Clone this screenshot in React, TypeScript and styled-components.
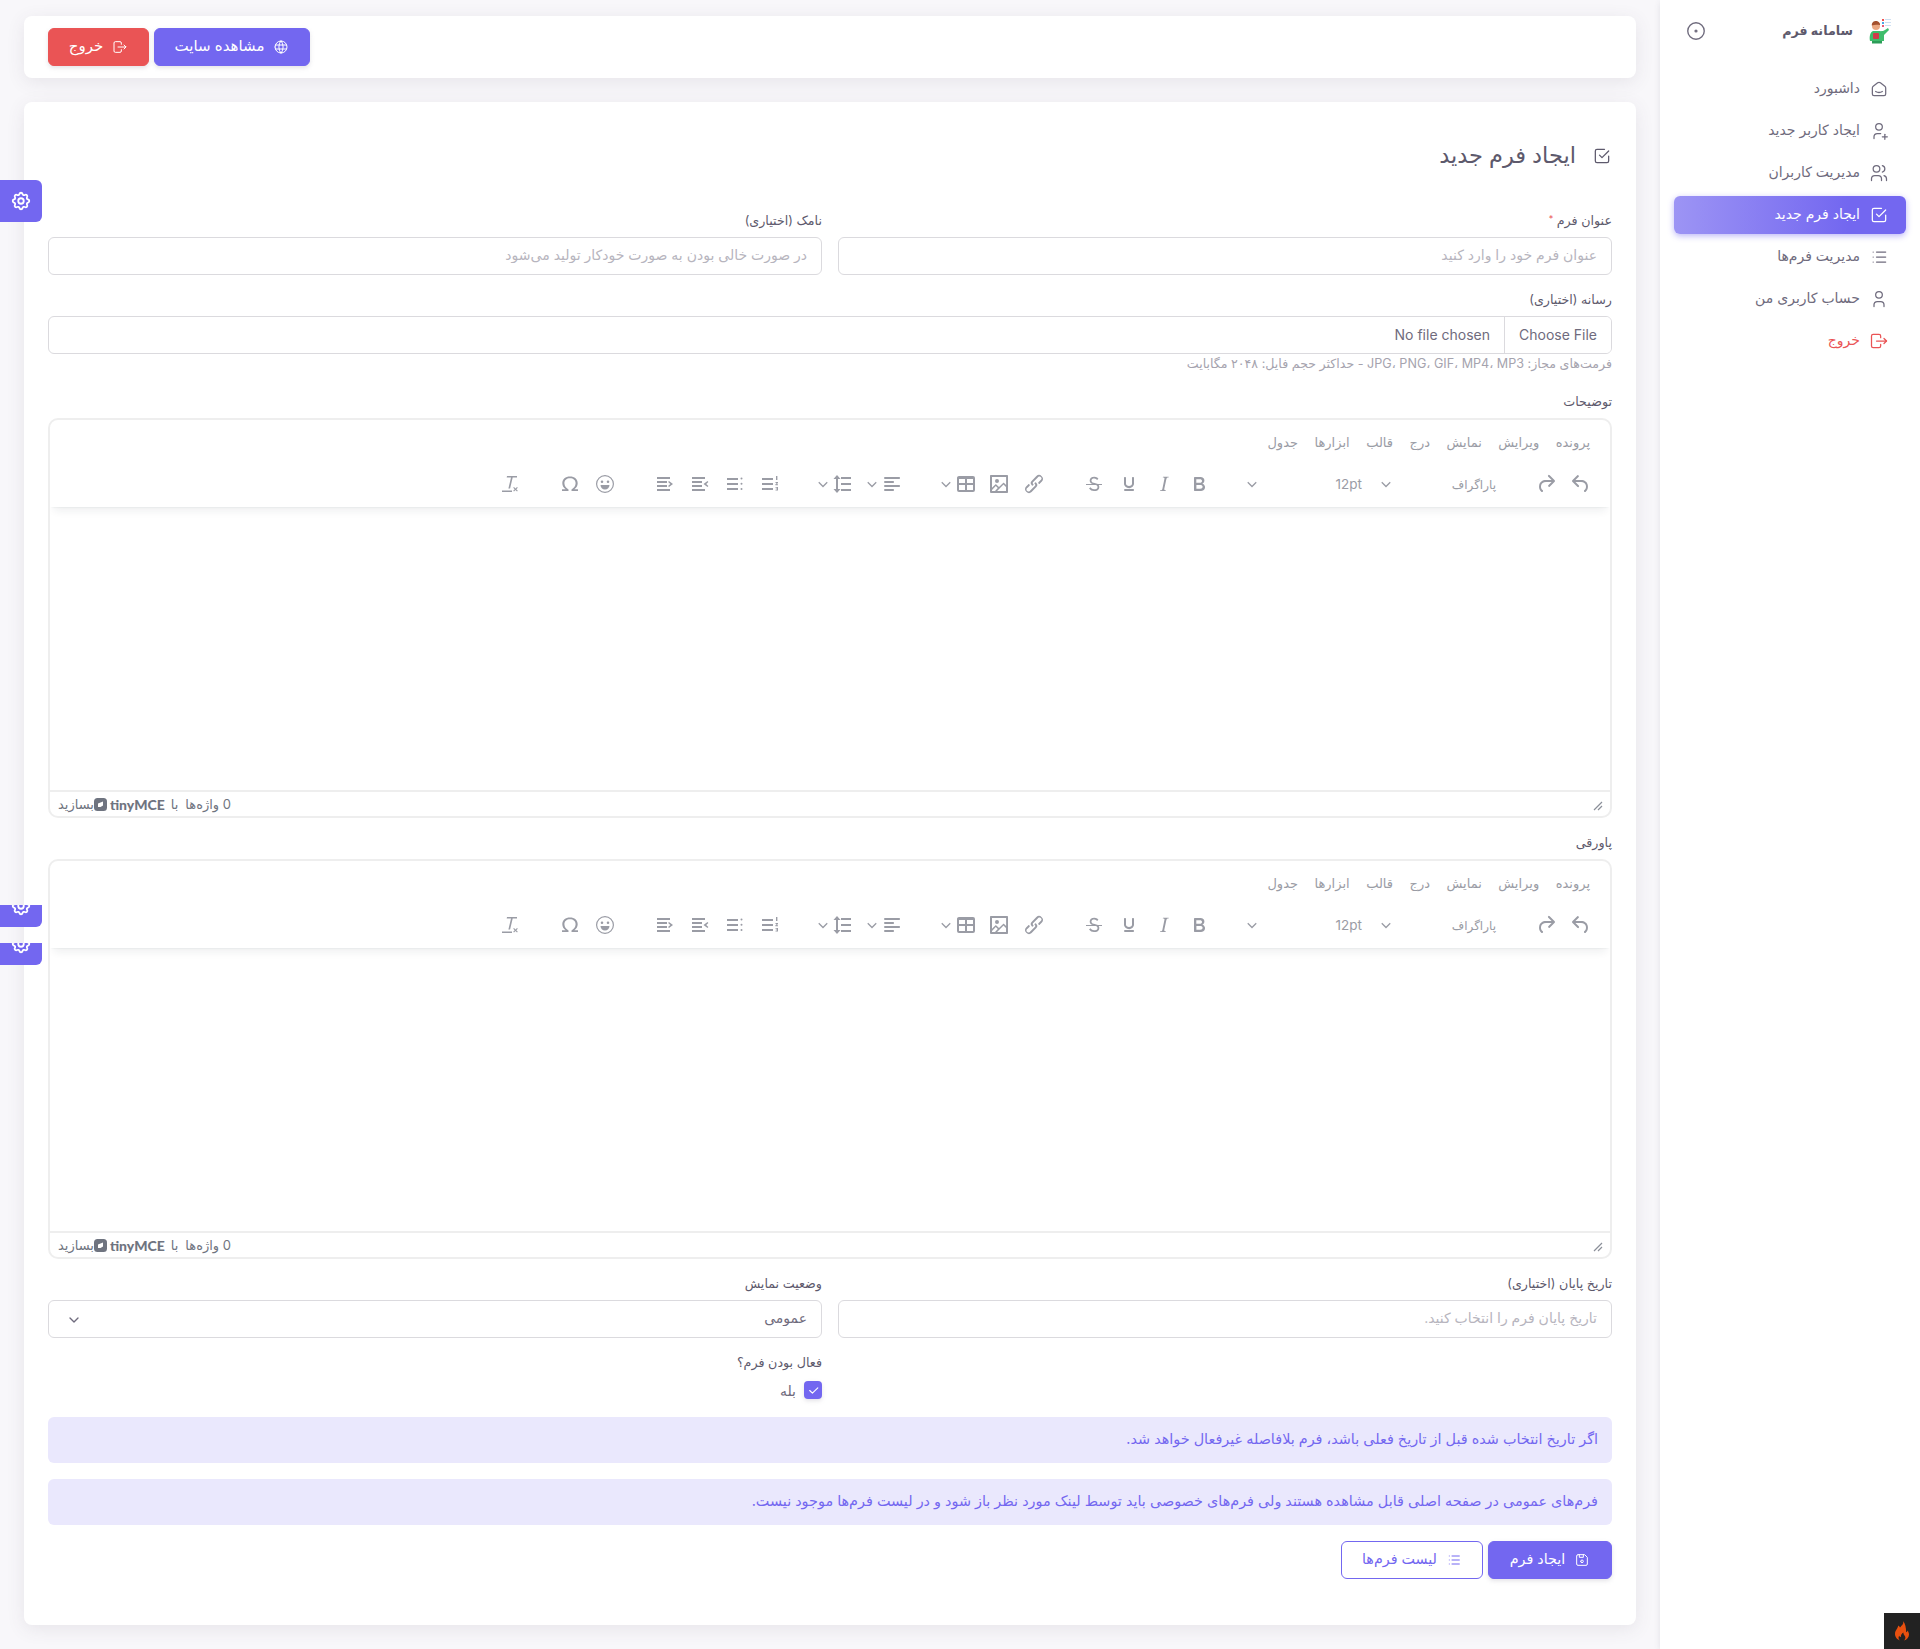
import React from 'react';
import styled, { createGlobalStyle } from 'styled-components';
import {
  TbSmartHome,
  TbUserPlus,
  TbUsers,
  TbCheckbox,
  TbList,
  TbUser,
  TbLogout,
  TbWorld,
  TbSettings,
  TbDeviceFloppy,
  TbCircleDot,
  TbChevronDown,
  TbCheck,
} from 'react-icons/tb';

const GlobalStyle = createGlobalStyle`
  html, body {
    margin: 0;
    padding: 0;
    background: #f8f7fa;
  }
  body {
    direction: rtl;
    font-family: Inter, "Noto Sans", "DejaVu Sans", sans-serif;
    color: #6f6b7d;
  }
  * { box-sizing: border-box; }
`;

const Page = styled.div`
  position: relative;
  display: flex;
  height: 1649px;
  overflow: hidden;
`;

const Sidebar = styled.aside`
  width: 260px;
  flex: none;
  background: #fff;
  box-shadow: 0 2px 6px rgba(75, 70, 92, 0.12);
  padding: 0 14px;
`;

const Brand = styled.div`
  display: flex;
  align-items: center;
  height: 62px;
  padding: 0 14px 0 11px;
`;

const BrandName = styled.span`
  font-size: 12.7px;
  font-weight: 700;
  color: #5d596c;
  margin-right: 15px;
  margin-top: -2px;
`;

const CollapseBtn = styled.span`
  margin-right: auto;
  display: flex;
  color: #6f6b7d;
  font-size: 22px;
  svg {
    stroke-width: 1.5;
  }
`;

const Menu = styled.nav`
  display: flex;
  flex-direction: column;
  gap: 4px;
  margin-top: 8px;
`;

// the fallback Arabic face sits low in its line box, so lift it a little
const Txt = styled.span`
  padding-bottom: 4px;
`;

const MenuItem = styled.a<{ $active?: boolean; $danger?: boolean }>`
  display: flex;
  align-items: center;
  gap: 9px;
  height: 38px;
  padding: 0 17px 0 0;
  border-radius: 6px;
  font-size: 14px;
  color: ${(p) => (p.$active ? '#fff' : p.$danger ? '#ea5455' : '#6f6b7d')};
  background: ${(p) =>
    p.$active ? 'linear-gradient(270deg, #7367f0 25%, rgba(115, 103, 240, 0.7) 100%)' : 'none'};
  box-shadow: ${(p) => (p.$active ? '0 2px 6px rgba(115, 103, 240, 0.48)' : 'none')};
  svg {
    font-size: 20px;
    flex: none;
    stroke-width: 1.5;
  }
`;

const Main = styled.main`
  flex: 1;
  min-width: 0;
  padding: 16px 24px 24px;
  display: flex;
  flex-direction: column;
  gap: 24px;
`;

const Card = styled.section`
  background: #fff;
  border-radius: 8px;
  box-shadow: 0 4px 18px rgba(75, 70, 92, 0.1);
`;

const Button = styled.button<{ $tone?: 'primary' | 'danger' | 'outline'; $wide?: number }>`
  height: 38px;
  width: ${(p) => p.$wide}px;
  display: inline-flex;
  align-items: center;
  justify-content: center;
  gap: 9px;
  border-radius: 6px;
  font: inherit;
  font-size: 14.3px;
  padding: 0;
  color: ${(p) => (p.$tone === 'outline' ? '#7367f0' : '#fff')};
  background: ${(p) =>
    p.$tone === 'danger' ? '#ea5455' : p.$tone === 'outline' ? '#fff' : '#7367f0'};
  border: 1px solid ${(p) => (p.$tone === 'danger' ? '#ea5455' : '#7367f0')};
  box-shadow: ${(p) => (p.$tone === 'outline' ? 'none' : '0 2px 4px rgba(165, 163, 174, 0.3)')};
  svg {
    font-size: 16px;
    stroke-width: 1.5;
  }
`;

const TopBar = styled(Card)`
  height: 62px;
  padding: 0 24px;
  display: flex;
  align-items: center;
  justify-content: flex-end;
  gap: 5px;
  ${Button} {
    font-size: 15px;
  }
`;

const FormCard = styled(Card)`
  flex: 1;
  padding: 24px;
`;

const Heading = styled.h4`
  display: flex;
  align-items: center;
  gap: 16px;
  height: 60px;
  margin: 0 0 25px;
  font-size: 22.5px;
  font-weight: 500;
  color: #5d596c;
  svg {
    font-size: 20px;
    stroke-width: 1.5;
  }
`;

const Row = styled.div`
  display: grid;
  grid-template-columns: 1fr 1fr;
  gap: 16px;
  margin-bottom: 15px;
`;

const Field = styled.div<{ $gap?: number }>`
  display: flex;
  flex-direction: column;
  margin-bottom: ${(p) => p.$gap ?? 0}px;
`;

const Label = styled.label`
  display: block;
  font-size: 12.7px;
  line-height: 20px;
  height: 20px;
  margin-bottom: 6px;
  color: #5d596c;
  em {
    color: #ea5455;
    font-style: normal;
    line-height: 0;
    vertical-align: 3px;
    font-size: 9px;
  }
`;

const Input = styled.input`
  height: 38px;
  width: 100%;
  border: 1px solid #dbdade;
  border-radius: 6px;
  padding: 0 14px 3px;
  font: inherit;
  font-size: 14px;
  color: #6f6b7d;
  background: #fff;
  &::placeholder {
    color: #b7b5be;
  }
  &[type='file'] {
    padding: 0;
    line-height: 36px;
    &::file-selector-button {
      height: 36px;
      padding: 0 14px 3px;
      margin: 0 0 0 14px;
      border: 0;
      border-left: 1px solid #dbdade;
      background: #fff;
      color: #6f6b7d;
      font: inherit;
    }
  }
`;

const Help = styled.small`
  font-size: 12.6px;
  line-height: 16px;
  margin-top: 2px;
  color: #a5a3ae;
`;

const SelectWrap = styled.div`
  position: relative;
  color: #6f6b7d;
  svg {
    position: absolute;
    left: 18px;
    top: 12px;
    font-size: 16px;
    pointer-events: none;
  }
`;

const Select = styled.select`
  height: 38px;
  width: 100%;
  appearance: none;
  border: 1px solid #dbdade;
  border-radius: 6px;
  padding: 0 14px 4px;
  background: #fff;
  font: inherit;
  font-size: 14px;
  color: #6f6b7d;
`;

const Editor = styled.div`
  height: 400px;
  border: 2px solid #eee;
  border-radius: 10px;
  display: flex;
  flex-direction: column;
  overflow: hidden;
  margin-bottom: 15px;
`;

const EditorHeader = styled.div`
  height: 87px;
  flex: none;
  box-shadow: 0 2px 2px -2px rgba(34, 47, 62, 0.1), 0 8px 8px -4px rgba(34, 47, 62, 0.07);
`;

const MenuBar = styled.div`
  display: flex;
  gap: 16.5px;
  height: 44px;
  align-items: center;
  padding: 0 20px 0 0;
  font-size: 13px;
  color: #9a9ca5;
`;

const Toolbar = styled.div`
  display: flex;
  align-items: center;
  height: 40px;
  gap: 25px;
  padding-right: 12px;
`;

const ToolGroup = styled.div`
  display: flex;
  align-items: center;
`;

const ToolBtn = styled.span`
  width: 35px;
  height: 34px;
  flex: none;
  display: flex;
  align-items: center;
  justify-content: center;
  color: #9a9ca5;
  svg {
    width: 24px;
    height: 24px;
    fill: currentColor;
  }
`;

const SplitBtn = styled.span<{ $pull?: number }>`
  height: 34px;
  flex: none;
  display: flex;
  align-items: center;
  padding: 0 6px;
  gap: 3px;
  margin-right: ${(p) => -(p.$pull ?? 0)}px;
  color: #9a9ca5;
  svg {
    width: 24px;
    height: 24px;
    fill: currentColor;
  }
  svg:last-child {
    width: 10px;
    height: 10px;
  }
`;

const SelectBtn = styled.span<{ $w: number; $pad: number; $size: number }>`
  width: ${(p) => p.$w}px;
  height: 34px;
  flex: none;
  display: flex;
  align-items: center;
  justify-content: space-between;
  padding: 0 ${(p) => p.$pad}px 0 6px;
  font-size: ${(p) => p.$size}px;
  color: #9a9ca5;
  svg {
    width: 10px;
    height: 10px;
    fill: currentColor;
  }
`;

const EditArea = styled.div`
  flex: 1;
`;

const StatusBar = styled.div`
  height: 26px;
  flex: none;
  border-top: 2px solid #eee;
  display: flex;
  align-items: center;
  justify-content: space-between;
  padding: 0 7px 0 8px;
  font-size: 13px;
  color: #6f7480;
`;

const StatusLeft = styled.div`
  display: flex;
  align-items: center;
  gap: 7px;
`;

const Brandline = styled.span`
  display: inline-flex;
  align-items: center;
  gap: 3px;
  b {
    font-family: Lato, Inter, sans-serif;
    font-size: 14px;
    font-weight: 900;
    color: #6f7480;
    direction: ltr;
    margin-right: 3px;
  }
  svg {
    margin-left: -3px;
  }
`;

const Grip = styled.svg`
  width: 10px;
  height: 10px;
  margin-top: 3px;
`;

const CheckRow = styled.div`
  display: flex;
  align-items: center;
  gap: 8px;
  font-size: 14px;
  color: #6f6b7d;
  margin-top: 2px;
`;

const CheckBox = styled.span`
  width: 18px;
  height: 18px;
  border-radius: 4px;
  background: #7367f0;
  color: #fff;
  display: flex;
  align-items: center;
  justify-content: center;
  box-shadow: 0 2px 4px rgba(165, 163, 174, 0.3);
  svg {
    font-size: 13px;
  }
`;

const Alert = styled.div`
  height: 46px;
  display: flex;
  align-items: center;
  padding: 0 14px 4px;
  background: #eae8fd;
  color: #7367f0;
  border-radius: 6px;
  font-size: 14.4px;
  margin-bottom: 16px;
`;

const Actions = styled.div`
  display: flex;
  gap: 5px;
`;

const GearTab = styled.div<{ $top: number; $h: number }>`
  position: absolute;
  left: 0;
  top: ${(p) => p.$top}px;
  width: 42px;
  height: ${(p) => p.$h}px;
  background: #7367f0;
  color: #fff;
  border-radius: 0 0 6px 0;
  overflow: hidden;
  display: flex;
  align-items: flex-end;
  justify-content: center;
  padding-bottom: 10px;
  svg {
    font-size: 22px;
    flex: none;
  }
`;

const MainGear = styled(GearTab)`
  border-radius: 0 6px 6px 0;
`;

const Badge = styled.div`
  position: absolute;
  right: 0;
  bottom: 0;
  width: 36px;
  height: 36px;
  background: #222;
  display: flex;
  align-items: center;
  justify-content: center;
`;

const Ic = {
  undo: 'M6.4 8H12c3.7 0 6.2 2 6.8 5.1.6 2.7-.4 5.6-2.3 6.8a1 1 0 0 1-1-1.8c1.1-.7 1.8-2.7 1.4-4.6-.5-2.1-2.1-3.5-4.9-3.5H6.4l3.3 3.3a1 1 0 1 1-1.4 1.4l-5-5a1 1 0 0 1 0-1.4l5-5a1 1 0 0 1 1.4 1.4L6.4 8Z',
  redo: 'M17.6 10H12c-2.8 0-4.4 1.4-4.9 3.5-.4 2 .3 3.9 1.4 4.6a1 1 0 1 1-1 1.8c-2-1.2-2.9-4.1-2.3-6.8.6-3 3-5.1 6.8-5.1h5.6l-3.3-3.3a1 1 0 1 1 1.4-1.4l5 5a1 1 0 0 1 0 1.4l-5 5a1 1 0 0 1-1.4-1.4l3.3-3.3Z',
  bold: 'M7.8 19c-.3 0-.5 0-.6-.2l-.2-.5V5.7c0-.2 0-.4.2-.5l.6-.2h5c1.5 0 2.7.3 3.5 1 .7.6 1.1 1.4 1.1 2.5a3 3 0 0 1-.6 1.9c-.4.6-1 1-1.6 1.2.4.1.9.3 1.3.6s.8.7 1 1.2c.4.4.5 1 .5 1.6 0 1.3-.4 2.3-1.3 3-.8.7-2.1 1-3.8 1H7.8Zm5-8.3c.6 0 1.2-.1 1.6-.5.4-.3.6-.7.6-1.3 0-1.1-.8-1.7-2.3-1.7H9.3v3.5h3.4Zm.5 6c.7 0 1.3-.1 1.7-.4.4-.4.6-.9.6-1.5s-.2-1-.7-1.4c-.4-.3-1-.4-2-.4H9.4v3.8h4Z',
  italic: 'm16.7 4.7-.1.9h-.3c-.6 0-1 0-1.4.3-.3.3-.4.6-.5 1.1l-2.1 9.8v.6c0 .5.4.8 1.4.8h.2l-.2.8H8l.2-.8h.2c1.1 0 1.8-.5 2-1.5l2-9.8.1-.5c0-.6-.4-.8-1.4-.8h-.3l.2-.9h5.8Z',
  underline: 'M16 5c.6 0 1 .4 1 1v5.5a4 4 0 0 1-.4 1.8l-1 1.4a5.3 5.3 0 0 1-5.5 1 5 5 0 0 1-1.6-1c-.5-.4-.8-.9-1.1-1.4a4 4 0 0 1-.4-1.8V6c0-.6.4-1 1-1s1 .4 1 1v5.5c0 .3 0 .6.2 1l.6.7a3.3 3.3 0 0 0 2.2.8 3.4 3.4 0 0 0 2.2-.8c.3-.2.4-.5.6-.8l.2-.9V6c0-.6.4-1 1-1ZM8 17h8c.6 0 1 .4 1 1s-.4 1-1 1H8a1 1 0 0 1 0-2Z',
  strike: 'M15.6 8.5c-.5-.7-1-1.1-1.3-1.3-.6-.4-1.3-.6-2-.6-2.7 0-2.8 1.7-2.8 2.1 0 1.6 1.8 2 3.2 2.3 4.4.9 4.6 2.8 4.6 3.9 0 1.4-.7 4.1-5 4.1A6.2 6.2 0 0 1 7 16.4l1.5-1.1c.4.6 1.6 2 3.7 2 1.6 0 2.5-.4 3-1 .3-.4.3-.8.3-1.2 0-.4 0-.8-.3-1.2-.5-.6-1.4-1-3-1.4-1.7-.3-4.5-1-4.5-3.9 0-2.3 1.7-3.9 4.6-3.9 1 0 2 .2 2.9.8.6.4 1 .9 1.2 1.2l-1.3 1.3ZM4 12h16v1H4Z',
  link: 'M6.2 12.3a1 1 0 0 1 1.4 1.4l-2 2a2 2 0 1 0 2.6 2.8l4.8-4.8a1 1 0 0 0 0-1.4 1 1 0 1 1 1.4-1.3 2.9 2.9 0 0 1 0 4L9.6 20a3.9 3.9 0 0 1-5.5-5.5l2-2Zm11.6-.6a1 1 0 0 1-1.4-1.4l2-2a2 2 0 1 0-2.6-2.8L11 10.3a1 1 0 0 0 0 1.4A1 1 0 1 1 9.6 13a2.9 2.9 0 0 1 0-4L14.4 4a3.9 3.9 0 0 1 5.5 5.5l-2 2Z',
  image: 'm5 15.7 3.3-3.2c.3-.3.7-.3 1 0L12 15l4.1-4c.3-.4.8-.4 1 0l2 1.9V5H5v10.7ZM5 18V19h3l2.8-2.9-2-2L5 17.9Zm14-3-2.5-2.4-6.4 6.5H19v-4ZM4 3h16c.6 0 1 .4 1 1v16c0 .6-.4 1-1 1H4a1 1 0 0 1-1-1V4c0-.6.4-1 1-1Zm6 8a2 2 0 1 0 0-4 2 2 0 0 0 0 4Z',
  table: 'M19 4a2 2 0 0 1 2 2v12a2 2 0 0 1-2 2H5a2 2 0 0 1-2-2V6c0-1.1.9-2 2-2h14Zm0 9h-6v5h6v-5Zm-8 0H5v5h6v-5Zm8-6h-6v4h6V7Zm-8 0H5v4h6V7Z',
  align: 'M5 5h14c.6 0 1 .4 1 1s-.4 1-1 1H5a1 1 0 1 1 0-2Zm0 4h8c.6 0 1 .4 1 1s-.4 1-1 1H5a1 1 0 1 1 0-2Zm0 8h8c.6 0 1 .4 1 1s-.4 1-1 1H5a1 1 0 0 1 0-2Zm0-4h14c.6 0 1 .4 1 1s-.4 1-1 1H5a1 1 0 0 1 0-2Z',
  lineHeight: 'M10 5h10v2H10ZM10 11h10v2H10ZM10 17h10v2H10ZM6 3l3.5 4h-2.5v10h2.5L6 21l-3.5-4H5V7H2.5Z',
  numlist: 'M4 6h11v2H4ZM4 11h11v2H4ZM4 16h11v2H4ZM18 4h1.4v4H18ZM17.5 10h2.5v1l-1.4 1.3H20v.9h-2.6v-.9l1.5-1.4h-1.4ZM17.5 15h2.5v3.5h-2.5v-.8h1.5v-.5h-1.2v-.7H19v-.7h-1.5Z',
  bullist: 'M4 6h11v2H4ZM4 11h11v2H4ZM4 16h11v2H4ZM18.500 5.500a1 1 0 1 1 0 2 1 1 0 0 1 0-2ZM18.500 10.800a1 1 0 1 1 0 2 1 1 0 0 1 0-2ZM18.500 16a1 1 0 1 1 0 2 1 1 0 0 1 0-2Z',
  arrowRight: 'M4 5h13v2H4ZM4 9h10v2H4ZM4 13h10v2H4ZM4 17h13v2H4ZM16 9l4 3-4 3-.9-.9 2.200-2.100-2.200-2.100Z',
  arrowLeft: 'M4 5h13v2H4ZM4 9h10v2H4ZM4 13h10v2H4ZM4 17h13v2H4ZM19.500 9l-4 3 4 3 .9-.9-2.200-2.100 2.200-2.100Z',
  emoji: 'M12 3a9 9 0 1 1 0 18 9 9 0 0 1 0-18Zm0 1.200a7.800 7.800 0 1 0 0 15.600 7.800 7.800 0 0 0 0-15.600ZM9 8.500a1.300 1.300 0 1 1 0 2.600 1.300 1.300 0 0 1 0-2.600Zm6 0a1.300 1.300 0 1 1 0 2.600 1.300 1.300 0 0 1 0-2.600ZM7.500 13h9c0 2.500-2 4.500-4.500 4.500S7.500 15.500 7.500 13Z',
  omega: 'M4 19v-1.700h3.600C5.600 15.800 4.300 13.600 4.300 11.200 4.300 7.200 7.500 4.500 12 4.500s7.700 2.700 7.700 6.700c0 2.400-1.300 4.600-3.300 6.100H20V19h-6.500v-1.600c2.200-1.100 4.100-3.300 4.100-6.100 0-3-2.300-5-5.600-5s-5.600 2-5.600 5c0 2.800 1.900 5 4.100 6.100V19Z',
  clear: 'M9 4h10v1.500h-4.300l-2.600 11h-1.700l2.600-11H8.700ZM4 18.500h10V20H4ZM16 15l1.500 1.500L19 15l.8.800-1.500 1.500 1.500 1.500-.8.800-1.500-1.500-1.500 1.500-.8-.8 1.500-1.500-1.500-1.500Z',
  chevron: 'M1.200 2.800 5 6.600l3.800-3.800.9.900L5 8.400.3 3.700Z',
};

const Glyph: React.FC<{ d: string }> = ({ d }) => (
  <svg viewBox="0 0 24 24">
    <path d={d} />
  </svg>
);

const Chevron: React.FC = () => (
  <svg viewBox="0 0 10 10">
    <path d={Ic.chevron} />
  </svg>
);

const Tool: React.FC<{ d: string }> = ({ d }) => (
  <ToolBtn>
    <Glyph d={d} />
  </ToolBtn>
);

const Split: React.FC<{ d: string; pull?: number }> = ({ d, pull }) => (
  <SplitBtn $pull={pull}>
    <Glyph d={d} />
    <Chevron />
  </SplitBtn>
);

const menus = ['پرونده', 'ویرایش', 'نمایش', 'درج', 'قالب', 'ابزارها', 'جدول'];

const RichEditor: React.FC = () => (
  <Editor>
    <EditorHeader>
      <MenuBar>
        {menus.map((m) => (
          <span key={m}>{m}</span>
        ))}
      </MenuBar>
      <Toolbar>
        <ToolGroup>
          <Tool d={Ic.undo} />
          <Tool d={Ic.redo} />
        </ToolGroup>
        <ToolGroup>
          <SelectBtn $w={128} $pad={7} $size={12}>
            <span>پاراگراف</span>
            <Chevron />
          </SelectBtn>
          <SelectBtn $w={134} $pad={13} $size={13.5}>
            <span>12pt</span>
            <Chevron />
          </SelectBtn>
        </ToolGroup>
        <ToolGroup>
          <Tool d={Ic.bold} />
          <Tool d={Ic.italic} />
          <Tool d={Ic.underline} />
          <Tool d={Ic.strike} />
        </ToolGroup>
        <ToolGroup>
          <Tool d={Ic.link} />
          <Tool d={Ic.image} />
          <Split d={Ic.table} pull={3} />
        </ToolGroup>
        <ToolGroup>
          <Split d={Ic.align} />
          <Split d={Ic.lineHeight} />
        </ToolGroup>
        <ToolGroup>
          <Tool d={Ic.numlist} />
          <Tool d={Ic.bullist} />
          <Tool d={Ic.arrowLeft} />
          <Tool d={Ic.arrowRight} />
        </ToolGroup>
        <ToolGroup>
          <Tool d={Ic.emoji} />
          <Tool d={Ic.omega} />
        </ToolGroup>
        <ToolGroup>
          <Tool d={Ic.clear} />
        </ToolGroup>
      </Toolbar>
    </EditorHeader>
    <EditArea />
    <StatusBar>
      <Grip viewBox="0 0 10 10">
        <path d="M9 1 1 9M9 5 5 9" stroke="#8b8f99" strokeWidth="1.2" />
      </Grip>
      <StatusLeft>
        <span>0 واژه‌ها</span>
        <Brandline>
          با
          <b>tinyMCE</b>
          <svg width="13" height="13" viewBox="0 0 13 13">
            <rect width="13" height="13" rx="3.5" fill="#6f7480" />
            <path d="M4 9V5.500L9 3.500V7.500L6.500 9Z" fill="#fff" />
          </svg>
          بسازید
        </Brandline>
      </StatusLeft>
    </StatusBar>
  </Editor>
);

const LogoFigure: React.FC = () => (
  <svg width="24" height="26" viewBox="0 0 24 26">
    <rect x="14" y="1" width="2" height="2" fill="#f0524f" />
    <rect x="14" y="4" width="2" height="2" fill="#4aa8e8" />
    <rect x="14" y="7" width="2" height="2" fill="#e85c7a" />
    <path d="M17 1.500h6M17 4.500h6M17 7.500h6" stroke="#cfe0f2" strokeWidth="1.2" />
    <circle cx="8" cy="8" r="4" fill="#eaa781" />
    <path d="M3.800 7.500C3.600 3.800 7 2.500 9.500 3.300 11.500 3.900 12.300 5.800 12 7 10 6.800 6.500 6.400 3.800 7.500Z" fill="#a4512e" />
    <path d="M2 23c-1-5 .5-9 3-10h6c2 .3 4 .3 6-1l3-2 1 2-5 5v6Z" fill="#3ebd6b" />
    <rect x="5" y="15" width="6" height="6" rx="1" fill="#d23a4a" />
    <rect x="4" y="23" width="10" height="2.500" fill="#2c9c58" />
  </svg>
);

const Flame: React.FC = () => (
  <svg width="18" height="22" viewBox="0 0 18 22">
    <path
      d="M10 1c1 3-1 4-3 6.500C6.500 6.500 6 6 5 5.500 5.500 8 2 10 2 14c0 3.500 2.500 5.500 5 6.500-1.500-1.500-2-3-.8-4.800 .5 1.100 1 1.300 1.600 1.300 0-2 .8-3.500 2.700-4.500-.3 1.500.6 2.500 1.500 3.700.8 1.300.3 3-1 4.300 2.800-.8 5-3 5-6 0-1.800-.8-3-1.500-4-.2 1-.6 1.500-1.300 1.800C13 8 12.500 3.500 10 1Z"
      fill="#e8500f"
    />
  </svg>
);

const App: React.FC = () => (
  <>
    <GlobalStyle />
    <Page>
      <Sidebar>
        <Brand>
          <LogoFigure />
          <BrandName>سامانه فرم</BrandName>
          <CollapseBtn>
            <TbCircleDot />
          </CollapseBtn>
        </Brand>
        <Menu>
          <MenuItem>
            <TbSmartHome />
            <Txt>داشبورد</Txt>
          </MenuItem>
          <MenuItem>
            <TbUserPlus />
            <Txt>ایجاد کاربر جدید</Txt>
          </MenuItem>
          <MenuItem>
            <TbUsers />
            <Txt>مدیریت کاربران</Txt>
          </MenuItem>
          <MenuItem $active>
            <TbCheckbox />
            <Txt>ایجاد فرم جدید</Txt>
          </MenuItem>
          <MenuItem>
            <TbList />
            <Txt>مدیریت فرم‌ها</Txt>
          </MenuItem>
          <MenuItem>
            <TbUser />
            <Txt>حساب کاربری من</Txt>
          </MenuItem>
          <MenuItem $danger>
            <TbLogout />
            <Txt>خروج</Txt>
          </MenuItem>
        </Menu>
      </Sidebar>
      <Main>
        <TopBar>
          <Button $wide={156}>
            <TbWorld />
            <Txt>مشاهده سایت</Txt>
          </Button>
          <Button $tone="danger" $wide={101}>
            <TbLogout />
            <Txt>خروج</Txt>
          </Button>
        </TopBar>
        <FormCard>
          <Heading>
            <TbCheckbox />
            <Txt>ایجاد فرم جدید</Txt>
          </Heading>
          <Row>
            <Field>
              <Label>
                عنوان فرم <em>*</em>
              </Label>
              <Input placeholder="عنوان فرم خود را وارد کنید" />
            </Field>
            <Field>
              <Label>نامک (اختیاری)</Label>
              <Input placeholder="در صورت خالی بودن به صورت خودکار تولید می‌شود" />
            </Field>
          </Row>
          <Field $gap={20}>
            <Label>رسانه (اختیاری)</Label>
            <Input type="file" />
            <Help>فرمت‌های مجاز: JPG، PNG، GIF، MP4، MP3 - حداکثر حجم فایل: ۲۰۴۸ مگابایت</Help>
          </Field>
          <Label as="div">توضیحات</Label>
          <RichEditor />
          <Label as="div">پاورقی</Label>
          <RichEditor />
          <Row>
            <Field>
              <Label>تاریخ پایان (اختیاری)</Label>
              <Input placeholder="تاریخ پایان فرم را انتخاب کنید." />
            </Field>
            <Field>
              <Label>وضعیت نمایش</Label>
              <SelectWrap>
                <Select defaultValue="public">
                  <option value="public">عمومی</option>
                </Select>
                <TbChevronDown />
              </SelectWrap>
            </Field>
          </Row>
          <Row>
            <div />
            <Field $gap={3}>
              <Label>فعال بودن فرم؟</Label>
              <CheckRow>
                <CheckBox>
                  <TbCheck />
                </CheckBox>
                بله
              </CheckRow>
            </Field>
          </Row>
          <Alert>اگر تاریخ انتخاب شده قبل از تاریخ فعلی باشد، فرم بلافاصله غیرفعال خواهد شد.</Alert>
          <Alert>
            فرم‌های عمومی در صفحه اصلی قابل مشاهده هستند ولی فرم‌های خصوصی باید توسط لینک مورد نظر باز شود و در لیست فرم‌ها موجود نیست.
          </Alert>
          <Actions>
            <Button $wide={124}>
              <TbDeviceFloppy />
              <Txt>ایجاد فرم</Txt>
            </Button>
            <Button $tone="outline" $wide={142}>
              <TbList />
              <Txt>لیست فرم‌ها</Txt>
            </Button>
          </Actions>
        </FormCard>
      </Main>
      <MainGear $top={180} $h={42}>
        <TbSettings />
      </MainGear>
      <GearTab $top={905} $h={22}>
        <TbSettings />
      </GearTab>
      <GearTab $top={943} $h={22}>
        <TbSettings />
      </GearTab>
      <Badge>
        <Flame />
      </Badge>
    </Page>
  </>
);

export default App;
